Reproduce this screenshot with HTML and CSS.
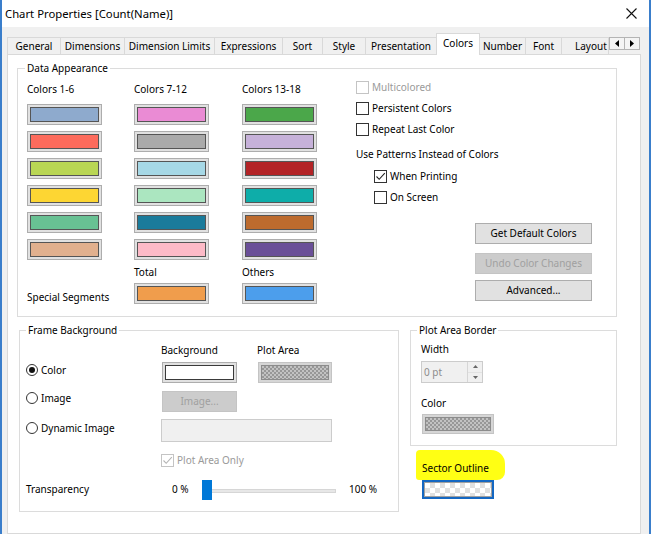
FILE: index.html
```
<!DOCTYPE html>
<html>
<head>
<meta charset="utf-8">
<title>Chart Properties</title>
<link rel="stylesheet" href="styles.css">
</head>
<body>
<div class="window">
  <div class="titlebar">
    <span class="title">Chart Properties [Count(Name)]</span>
    <svg class="close" width="11" height="11" viewBox="0 0 11 11"><path d="M0.5 0.5L10.5 10.5M10.5 0.5L0.5 10.5" stroke="#111" stroke-width="1.1" fill="none"/></svg>
  </div>
  <div class="main">
    <div class="tabs">
      <div class="tab t-gen">General</div>
      <div class="tab t-dim">Dimensions</div>
      <div class="tab t-lim">Dimension Limits</div>
      <div class="tab t-exp">Expressions</div>
      <div class="tab t-sort">Sort</div>
      <div class="tab t-style">Style</div>
      <div class="tab t-pres">Presentation</div>
      <div class="tab t-col sel">Colors</div>
      <div class="tab t-num">Number</div>
      <div class="tab t-font">Font</div>
      <div class="tab t-lay">Layout</div>
      <div class="tab-arrows">
        <span class="arr"><svg width="4" height="7" viewBox="0 0 4 7"><path d="M4 0L0 3.5L4 7Z" fill="#000"/></svg></span>
        <span class="arr"><svg width="4" height="7" viewBox="0 0 4 7"><path d="M0 0L4 3.5L0 7Z" fill="#000"/></svg></span>
      </div>
    </div>
    <div class="page">
      <div class="group data">
        <div class="legend">Data Appearance</div>
        <div class="data-body">
          <div class="palette">
            <div class="plabels"><span>Colors 1-6</span><span>Colors 7-12</span><span>Colors 13-18</span></div>
            <div class="prow first"><span class="sw"><i class="k1"></i></span><span class="sw"><i class="k7"></i></span><span class="sw"><i class="k13"></i></span></div>
            <div class="prow"><span class="sw"><i class="k2"></i></span><span class="sw"><i class="k8"></i></span><span class="sw"><i class="k14"></i></span></div>
            <div class="prow"><span class="sw"><i class="k3"></i></span><span class="sw"><i class="k9"></i></span><span class="sw"><i class="k15"></i></span></div>
            <div class="prow"><span class="sw"><i class="k4"></i></span><span class="sw"><i class="k10"></i></span><span class="sw"><i class="k16"></i></span></div>
            <div class="prow"><span class="sw"><i class="k5"></i></span><span class="sw"><i class="k11"></i></span><span class="sw"><i class="k17"></i></span></div>
            <div class="prow"><span class="sw"><i class="k6"></i></span><span class="sw"><i class="k12"></i></span><span class="sw"><i class="k18"></i></span></div>
            <div class="plabels tot"><span></span><span>Total</span><span>Others</span></div>
            <div class="prow last"><span class="special">Special Segments</span><span class="sw"><i class="k19"></i></span><span class="sw"><i class="k20"></i></span></div>
          </div>
          <div class="opts">
            <div class="chk first"><span class="cb dis"></span><span class="dis-t">Multicolored</span></div>
            <div class="chk"><span class="cb"></span><span>Persistent Colors</span></div>
            <div class="chk"><span class="cb"></span><span>Repeat Last Color</span></div>
            <div class="note">Use Patterns Instead of Colors</div>
            <div class="chk indent after-note"><span class="cb"><svg width="11" height="11" viewBox="0 0 11 11"><path d="M1.5 5.5L4.2 8.3L9.8 2.2" stroke="#222" stroke-width="1.1" fill="none"/></svg></span><span>When Printing</span></div>
            <div class="chk indent"><span class="cb"></span><span>On Screen</span></div>
            <div class="btn b1">Get Default Colors</div>
            <div class="btn dis b2">Undo Color Changes</div>
            <div class="btn b3">Advanced...</div>
          </div>
        </div>
      </div>
      <div class="row2">
        <div class="group frame">
          <div class="legend">Frame Background</div>
          <div class="fbody">
            <div class="fr fr-a"><span class="c1"></span><span class="c2">Background</span><span>Plot Area</span></div>
            <div class="fr fr-b">
              <span class="c1"><span class="radio on"></span><span class="rl">Color</span></span>
              <span class="c2"><span class="sw white"><i></i></span></span>
              <span class="psw"><i class="checker"></i></span>
            </div>
            <div class="fr fr-c">
              <span class="c1"><span class="radio"></span><span class="rl">Image</span></span>
              <span class="btn dis img-btn">Image...</span>
            </div>
            <div class="fr fr-d">
              <span class="c1"><span class="radio"></span><span class="rl">Dynamic Image</span></span>
              <span class="dyn"></span>
            </div>
            <div class="fr fr-e">
              <span class="c1"></span>
              <span class="cb dis"><svg width="11" height="11" viewBox="0 0 11 11"><path d="M1.5 5.5L4.2 8.3L9.8 2.2" stroke="#b4b4b4" stroke-width="1.1" fill="none"/></svg></span><span class="dis-t">Plot Area Only</span>
            </div>
            <div class="fr fr-f">
              <span class="c1">Transparency</span>
              <span class="pct0">0 %</span>
              <span class="slider"><span class="thumb"></span></span>
              <span class="pct100">100 %</span>
            </div>
          </div>
        </div>
        <div class="rcol">
          <div class="group pborder">
            <div class="legend">Plot Area Border</div>
            <div class="pbody">
              <div class="pb-l1">Width</div>
              <div class="spin">
                <span class="spin-val">0 pt</span>
                <span class="spin-btns">
                  <span class="sb"><svg width="5" height="3" viewBox="0 0 5 3"><path d="M0 3L2.5 0L5 3Z" fill="#666"/></svg></span>
                  <span class="sb"><svg width="5" height="3" viewBox="0 0 5 3"><path d="M0 0L2.5 3L5 0Z" fill="#666"/></svg></span>
                </span>
              </div>
              <div class="pb-l2">Color</div>
              <div class="psw csw"><i class="checker"></i></div>
            </div>
          </div>
          <div class="hl">Sector Outline</div>
          <div class="ssw"><i class="checker-light"></i></div>
        </div>
      </div>
    </div>
  </div>
</div>
</body>
</html>
```
FILE: styles.css
```
* { box-sizing: border-box; }

body {
  margin: 0;
  width: 651px;
  height: 534px;
  overflow: hidden;
  background: #f0f0f0;
  font-family: "Noto Sans", "Liberation Sans", sans-serif;
  font-size: 10px;
  line-height: 13px;
  color: #000;
}

.window {
  width: 651px;
  height: 534px;
  border-left: 2px solid #3a7ecb;
  border-right: 2px solid #3a7ecb;
  display: flex;
  flex-direction: column;
}

.titlebar {
  flex: none;
  height: 27px;
  background: #fff;
  display: flex;
  align-items: center;
  padding: 0 12px 0 3px;
  font-size: 11.3px;
}
.close { margin-left: auto; }

.main {
  flex: 1;
  min-height: 0;
  display: flex;
  flex-direction: column;
  padding: 6px 8px 0 5px;
}

/* tabs */
.tabs {
  flex: none;
  height: 21px;
  display: flex;
  align-items: flex-end;
  position: relative;
  z-index: 1;
}
.tab {
  height: 17px;
  margin-left: -1px;
  border: 1px solid #d9d9d9;
  border-bottom: none;
  background: #f0f0f0;
  display: flex;
  align-items: center;
  justify-content: center;
  white-space: nowrap;
  overflow: hidden;
}
.tab:first-child { margin-left: 0; }
.tab.sel {
  height: 22px;
  margin-bottom: -1px;
  background: #fff;
  padding-bottom: 3px;
}
.t-gen { width: 54px; }
.t-dim { width: 65px; }
.t-lim { width: 91px; }
.t-exp { width: 69px; }
.t-sort { width: 41px; }
.t-style { width: 44px; }
.t-pres { width: 72px; }
.t-col { width: 44px; }
.t-num { width: 47px; }
.t-font { width: 37px; }
.t-lay { width: 48px; justify-content: flex-start; padding-left: 13px; overflow: visible; }

.tab-arrows {
  align-self: flex-start;
  margin-top: 4px;
  display: flex;
}
.arr {
  width: 16px;
  height: 13px;
  border: 1px solid #b4b4b4;
  background: #f4f4f4;
  display: flex;
  align-items: center;
  justify-content: center;
}
.arr + .arr { margin-left: -1px; }

/* page */
.page {
  flex: 1;
  background: #fff;
  border: 1px solid #d9d9d9;
  padding: 13px 0 0 9px;
}

.group { border: 1px solid #dcdcdc; flex: none; }
.legend {
  width: max-content;
  height: 13px;
  margin: -7px 0 0 6px;
  padding: 0 2px;
  background: #fff;
}

/* data appearance */
.data { width: 600px; height: 249px; }
.data .legend { margin-left: 7px; }
.data-body { display: flex; padding-left: 9px; }

.palette { width: 290px; flex: none; }
.plabels, .prow {
  display: grid;
  grid-template-columns: 107px 108px 75px;
}
.plabels { margin-top: 8px; height: 13px; }
.plabels.tot { margin-top: 6px; }
.prow { height: 21px; margin-top: 6px; }
.prow.first { margin-top: 8px; }
.prow.last { margin-top: 4px; }
.special { align-self: end; }

.sw {
  display: block;
  width: 75px;
  height: 21px;
  border: 1px solid #adadad;
  background: #e1e1e1;
  padding: 2px;
}
.sw i {
  display: block;
  height: 100%;
  border: 1px solid #555;
}
.k1 { background: #8eaacd; }
.k2 { background: #fd6b5c; }
.k3 { background: #b9d654; }
.k4 { background: #fdd633; }
.k5 { background: #68c193; }
.k6 { background: #e1b08e; }
.k7 { background: #ea8bd4; }
.k8 { background: #aaaaaa; }
.k9 { background: #a6d8e6; }
.k10 { background: #abe6c0; }
.k11 { background: #1a7b9b; }
.k12 { background: #fdbac7; }
.k13 { background: #4ba74a; }
.k14 { background: #c6b1d9; }
.k15 { background: #b32326; }
.k16 { background: #0eada9; }
.k17 { background: #bd6b2e; }
.k18 { background: #6a4f98; }
.k19 { background: #f09d4c; }
.k20 { background: #4c9eec; }

.opts {
  margin-left: 39px;
  width: 236px;
  display: flex;
  flex-direction: column;
}
.chk { display: flex; align-items: center; height: 21px; }
.chk.first { margin-top: 2px; }
.indent { padding-left: 18px; }
.note { margin-top: 4px; height: 21px; display: flex; align-items: center; }
.after-note { margin-top: 1px; }

.cb {
  flex: none;
  width: 13px;
  height: 13px;
  border: 1px solid #333;
  background: #fff;
  margin-right: 3px;
  display: flex;
  align-items: center;
  justify-content: center;
}
.cb.dis { border-color: #c4c4c4; }
.dis-t { color: #9a9a9a; }

.btn {
  align-self: flex-end;
  width: 117px;
  height: 21px;
  border: 1px solid #adadad;
  background: #e1e1e1;
  display: flex;
  align-items: center;
  justify-content: center;
}
.btn.dis { background: #cccccc; border-color: #c4c4c4; color: #a0a0a0; }
.b1 { margin-top: 15px; }
.b2 { margin-top: 9px; }
.b3 { margin-top: 6px; }

/* second row */
.row2 {
  display: flex;
  align-items: flex-start;
  margin: 13px 0 0 2px;
}
.frame { width: 380px; height: 182px; }
.fbody { padding-left: 6px; }
.fr { display: flex; }
.c1 { width: 135px; flex: none; display: flex; align-items: flex-start; }
.c2 { width: 96px; flex: none; }
.rl { line-height: 12px; }

.radio {
  flex: none;
  width: 12px;
  height: 12px;
  border: 1px solid #333;
  border-radius: 50%;
  background: #fff;
  margin-right: 3px;
  display: flex;
  align-items: center;
  justify-content: center;
}
.radio.on::after {
  content: "";
  width: 6px;
  height: 6px;
  border-radius: 50%;
  background: #111;
}

.fr-a { margin-top: 7px; height: 13px; }
.fr-b { margin-top: 5px; height: 21px; }
.fr-b .c1 { padding-top: 2px; }
.fr-b .sw { margin-left: 1px; }
.sw.white i { background: #fff; border-color: #3a3a3a; }

.psw {
  display: block;
  margin-left: 1px;
  width: 74px;
  height: 21px;
  border: 1px solid #c4c4c4;
  background: #d6d6d6;
  padding: 2px;
}
.psw i {
  display: block;
  height: 100%;
  border: 1px solid #8c8c8c;
}
.checker {
  background-color: #c2c2c2;
  background-image: conic-gradient(#979797 25%, transparent 0 50%, #979797 0 75%, transparent 0);
  background-size: 4px 4px;
}
.checker-light {
  background-color: #fff;
  background-image: conic-gradient(#e0e0e0 25%, transparent 0 50%, #e0e0e0 0 75%, transparent 0);
  background-size: 10px 10px;
}

.fr-c { margin-top: 8px; height: 21px; }
.fr-c .c1 { padding-top: 1px; }
.img-btn { align-self: auto; margin-left: 1px; width: 75px; }

.fr-d { margin-top: 7px; height: 23px; }
.fr-d .c1 { padding-top: 3px; }
.dyn {
  width: 171px;
  height: 23px;
  border: 1px solid #cccccc;
  background: #f0f0f0;
}

.fr-e { margin-top: 11px; height: 14px; align-items: center; }
.fr-f { margin-top: 12px; height: 21px; align-items: center; }
.fr-f .c1 { align-items: center; }
.pct0 { margin-left: 11px; width: 30px; }
.slider {
  width: 134px;
  height: 21px;
  display: flex;
  align-items: flex-end;
  background:
    linear-gradient(#e7e7e7, #e7e7e7) 1px 11px / calc(100% - 2px) 2px no-repeat,
    linear-gradient(#d6d6d6, #d6d6d6) 0 10px / 100% 4px no-repeat;
}
.thumb { width: 10px; height: 20px; background: #0078d7; }
.pct100 { margin-left: 13px; }

/* right column */
.rcol { margin-left: 11px; width: 207px; flex: none; }
.pborder { width: 207px; height: 116px; }
.pbody { padding-left: 10px; }
.pb-l1 { margin-top: 6px; height: 13px; }
.spin {
  margin-top: 5px;
  width: 62px;
  height: 22px;
  border: 1px solid #cccccc;
  background: #f0f0f0;
  display: flex;
}
.spin-val {
  flex: 1;
  padding-left: 2px;
  color: #8c8c8c;
  display: flex;
  align-items: center;
}
.spin-btns {
  width: 15px;
  border-left: 1px solid #d6d6d6;
  display: flex;
  flex-direction: column;
}
.sb {
  flex: 1;
  display: flex;
  align-items: center;
  justify-content: center;
}
.sb + .sb { border-top: 1px solid #e2e2e2; }
.pb-l2 { margin-top: 14px; height: 13px; }
.csw { margin-top: 4px; width: 72px; height: 20px; }

.hl {
  margin: 4px 0 0 6px;
  width: 89px;
  height: 30px;
  background: #ffff14;
  border-radius: 4px 14px 8px 3px;
  display: flex;
  align-items: flex-end;
  padding: 0 0 5px 6px;
}
.ssw {
  margin-left: 12px;
  width: 72px;
  height: 19px;
  border: 2px solid #1467c2;
  padding: 0;
}
.ssw i {
  display: block;
  height: 100%;
  border: 1px solid #a0a0a0;
}
```
